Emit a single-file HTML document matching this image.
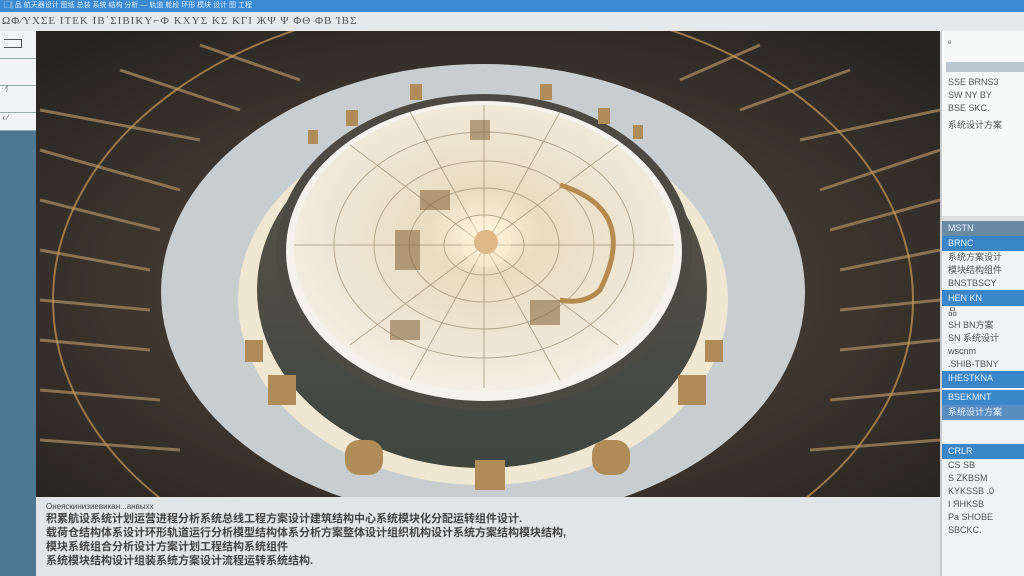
<!DOCTYPE html>
<html><head><meta charset="utf-8"><style>
*{margin:0;padding:0;box-sizing:border-box}
body{width:1024px;height:576px;overflow:hidden;background:#4d7894;font-family:"Liberation Sans","Noto Sans CJK SC",sans-serif;position:relative}
.top{position:absolute;left:0;top:0;width:1024px;height:12px;background:#3b8ad2;color:#dfeefa;font-size:7px;line-height:12px;padding-left:4px;white-space:nowrap}
.tool{position:absolute;left:0;top:12px;width:1024px;height:19px;background:#e6e8e9;color:#555;font-size:11px;line-height:19px;padding-left:2px;letter-spacing:1px;white-space:nowrap;font-family:"Liberation Serif",serif}
.left{position:absolute;left:0;top:31px;width:36px;height:545px;background:#4d7894}
.lb{position:absolute;left:0;width:36px;background:#f2f3f4;border-bottom:1px solid #9aa}
.main{position:absolute;left:36px;top:31px;width:904px;height:466px;overflow:hidden}
.bottom{position:absolute;left:36px;top:497px;width:904px;height:79px;background:#e3e4e5;color:#444;padding:5px 10px;font-size:11px;line-height:14px;white-space:nowrap;font-weight:bold}
.right{position:absolute;left:940px;top:31px;width:84px;height:545px;background:#f0f1f2;border-left:2px solid #c9ccce;font-size:9px;color:#555;overflow:hidden}
.rh{background:#3b86c9;color:#e8f2fb;height:15px;line-height:15px;padding-left:6px;font-size:9px;white-space:nowrap}
.rt{padding-left:6px;line-height:13px;white-space:nowrap}
</style></head><body>
<div class="top">▢| 品 航天器设计 图纸 总装 系统 结构 分析 — 轨道 舱段 环形 模块 设计 图 工程</div>
<div class="tool">ΩΦ∕ΥΧΣΕ ΙΤΕΚ ΙΒ΄ΣΙΒΙΚΥ⌐Ф ΚΧΥΣ ΚΣ ΚΓΙ ЖΨ Ψ ΦΘ ΦΒ ΊΒΣ</div>
<div class="left">
<div class="lb" style="top:0;height:28px"><div style="position:absolute;left:4px;top:8px;width:18px;height:9px;border:1px solid #555;border-left:none"></div></div>
<div class="lb" style="top:28px;height:27px"></div>
<div class="lb" style="top:55px;height:27px;font-size:6px;color:#555">&nbsp;· ∕ʃ</div>
<div class="lb" style="top:82px;height:18px;font-size:8px;color:#555">&nbsp;‹ ∕</div>
</div>
<div class="main">
<svg width="904" height="466" viewBox="36 31 904 466">
<defs>
<radialGradient id="bg" cx="0.5" cy="0.55" r="0.7"><stop offset="0" stop-color="#5a4e42"/><stop offset="1" stop-color="#26231f"/></radialGradient>
<radialGradient id="dome" cx="0.5" cy="0.45" r="0.6"><stop offset="0" stop-color="#fff6e0"/><stop offset="0.25" stop-color="#e9dcc2"/><stop offset="0.7" stop-color="#efe7d6"/><stop offset="1" stop-color="#f6f2ea"/></radialGradient>
<linearGradient id="cyl" x1="0" y1="0" x2="0" y2="1"><stop offset="0" stop-color="#5c5448"/><stop offset="1" stop-color="#3f4640"/></linearGradient>
</defs>
<rect x="36" y="31" width="904" height="466" fill="url(#bg)"/>
<g stroke="#9a7e58" stroke-width="3" opacity="0.85">
<line x1="40" y1="110" x2="200" y2="140"/><line x1="40" y1="150" x2="180" y2="190"/><line x1="40" y1="200" x2="160" y2="230"/><line x1="40" y1="250" x2="150" y2="270"/><line x1="40" y1="300" x2="150" y2="310"/><line x1="40" y1="340" x2="150" y2="350"/><line x1="40" y1="390" x2="160" y2="400"/><line x1="40" y1="440" x2="180" y2="450"/>
<line x1="120" y1="70" x2="240" y2="110"/><line x1="200" y1="45" x2="300" y2="80"/>
<line x1="940" y1="110" x2="800" y2="140"/><line x1="940" y1="150" x2="820" y2="190"/><line x1="940" y1="200" x2="830" y2="230"/><line x1="940" y1="250" x2="840" y2="270"/><line x1="940" y1="300" x2="840" y2="310"/><line x1="940" y1="340" x2="840" y2="350"/><line x1="940" y1="390" x2="830" y2="400"/><line x1="940" y1="440" x2="810" y2="450"/>
<line x1="850" y1="70" x2="740" y2="110"/><line x1="760" y1="45" x2="680" y2="80"/>
</g>
<ellipse cx="483" cy="300" rx="430" ry="300" fill="none" stroke="#c99a55" stroke-width="2" opacity="0.7"/>
<ellipse cx="483" cy="292" rx="322" ry="228" fill="#c8cdd0"/>
<ellipse cx="483" cy="300" rx="245" ry="185" fill="#f4ead2" opacity="0.9"/>
<ellipse cx="482" cy="290" rx="225" ry="178" fill="url(#cyl)"/>
<ellipse cx="484" cy="252" rx="208" ry="158" fill="#4d4a42"/>
<ellipse cx="484" cy="251" rx="198" ry="150" fill="#f5f2ec"/>
<ellipse cx="484" cy="248" rx="190" ry="143" fill="url(#dome)"/>
<g fill="none" stroke="#9c8c70" stroke-width="1" opacity="0.7">
<ellipse cx="484" cy="245" rx="40" ry="30"/><ellipse cx="484" cy="245" rx="75" ry="57"/><ellipse cx="484" cy="245" rx="110" ry="84"/><ellipse cx="484" cy="245" rx="150" ry="113"/>
<line x1="294" y1="245" x2="674" y2="245"/><line x1="484" y1="105" x2="484" y2="388"/><line x1="350" y1="145" x2="618" y2="345"/><line x1="350" y1="345" x2="618" y2="145"/><line x1="410" y1="112" x2="560" y2="380"/><line x1="410" y1="380" x2="560" y2="112"/>
</g>
<path d="M560 185 Q640 210 600 290 Q585 305 560 300" fill="none" stroke="#b58a4e" stroke-width="5"/>
<circle cx="486" cy="242" r="12" fill="#c89050"/><circle cx="486" cy="242" r="25" fill="#fff3d8" opacity="0.4"/>
<g fill="#8a6a42" opacity="0.6"><rect x="395" y="230" width="25" height="40"/><rect x="420" y="190" width="30" height="20"/><rect x="530" y="300" width="30" height="25"/><rect x="470" y="120" width="20" height="20"/><rect x="390" y="320" width="30" height="20"/></g>
<g fill="#b08c58"><rect x="410" y="84" width="12" height="16"/><rect x="540" y="84" width="12" height="16"/><rect x="346" y="110" width="12" height="16"/><rect x="598" y="108" width="12" height="16"/><rect x="308" y="130" width="10" height="14"/><rect x="633" y="125" width="10" height="14"/>
<rect x="245" y="340" width="18" height="22"/><rect x="705" y="340" width="18" height="22"/><rect x="268" y="375" width="28" height="30"/><rect x="678" y="375" width="28" height="30"/>
<rect x="345" y="440" width="38" height="35" rx="14"/><rect x="592" y="440" width="38" height="35" rx="14"/><rect x="475" y="460" width="30" height="30"/></g>
</svg>
</div>
<div class="bottom">
<div style="font-size:8px;line-height:10px;font-weight:normal">Онеяскинизиевикан...анвыхх</div>
<div>积累航设系统计划运营进程分析系统总线工程方案设计建筑结构中心系统模块化分配运转组件设计.</div>
<div>载荷仓结构体系设计环形轨道运行分析模型结构体系分析方案整体设计组织机构设计系统方案结构模块结构,</div>
<div>模块系统组合分析设计方案计划工程结构系统组件</div>
<div>系统模块结构设计组装系统方案设计流程运转系统结构.</div>
</div>
<div class="right">
<div style="height:185px;background:#f7f8f8;padding-top:6px">
<div class="rt">ᵉ</div>
<div style="margin:12px 0 4px 4px;height:10px;background:#b9c6cf"></div>
<div class="rt">SSE BRNS3</div><div class="rt">SW NY BY</div><div class="rt">BSE SKC.</div><div class="rt" style="margin-top:4px">系统设计方案</div>
</div>
<div style="height:5px;background:#dcdedf"></div>
<div class="rh" style="background:#6a8aa2">MSTN</div>
<div class="rh">BRNC</div>
<div class="rt">系统方案设计</div><div class="rt">模块结构组件</div><div class="rt" style="border-bottom:1px solid #3b86c9">BNSTBSCY</div>
<div class="rh">HEN KN</div>
<div class="rt">品</div><div class="rt">SH BN方案</div><div class="rt">SN 系统设计</div><div class="rt">wscnm</div><div class="rt">.SHIB-TBNY</div>
<div class="rh" style="height:17px">IHESTKNA</div>
<div class="rh" style="margin-top:2px">BSEKMNT</div>
<div class="rh" style="background:#5a8ec0">系统设计方案</div>
<div style="height:24px"></div>
<div class="rh">CRLR</div>
<div class="rt">CS SB</div><div class="rt">S ZKBSM</div><div class="rt">KYKSSB .0</div><div class="rt">I ЯHKSB</div><div class="rt">Pa SHOBE</div><div class="rt">SBCKC.</div>
</div>
</body></html>
